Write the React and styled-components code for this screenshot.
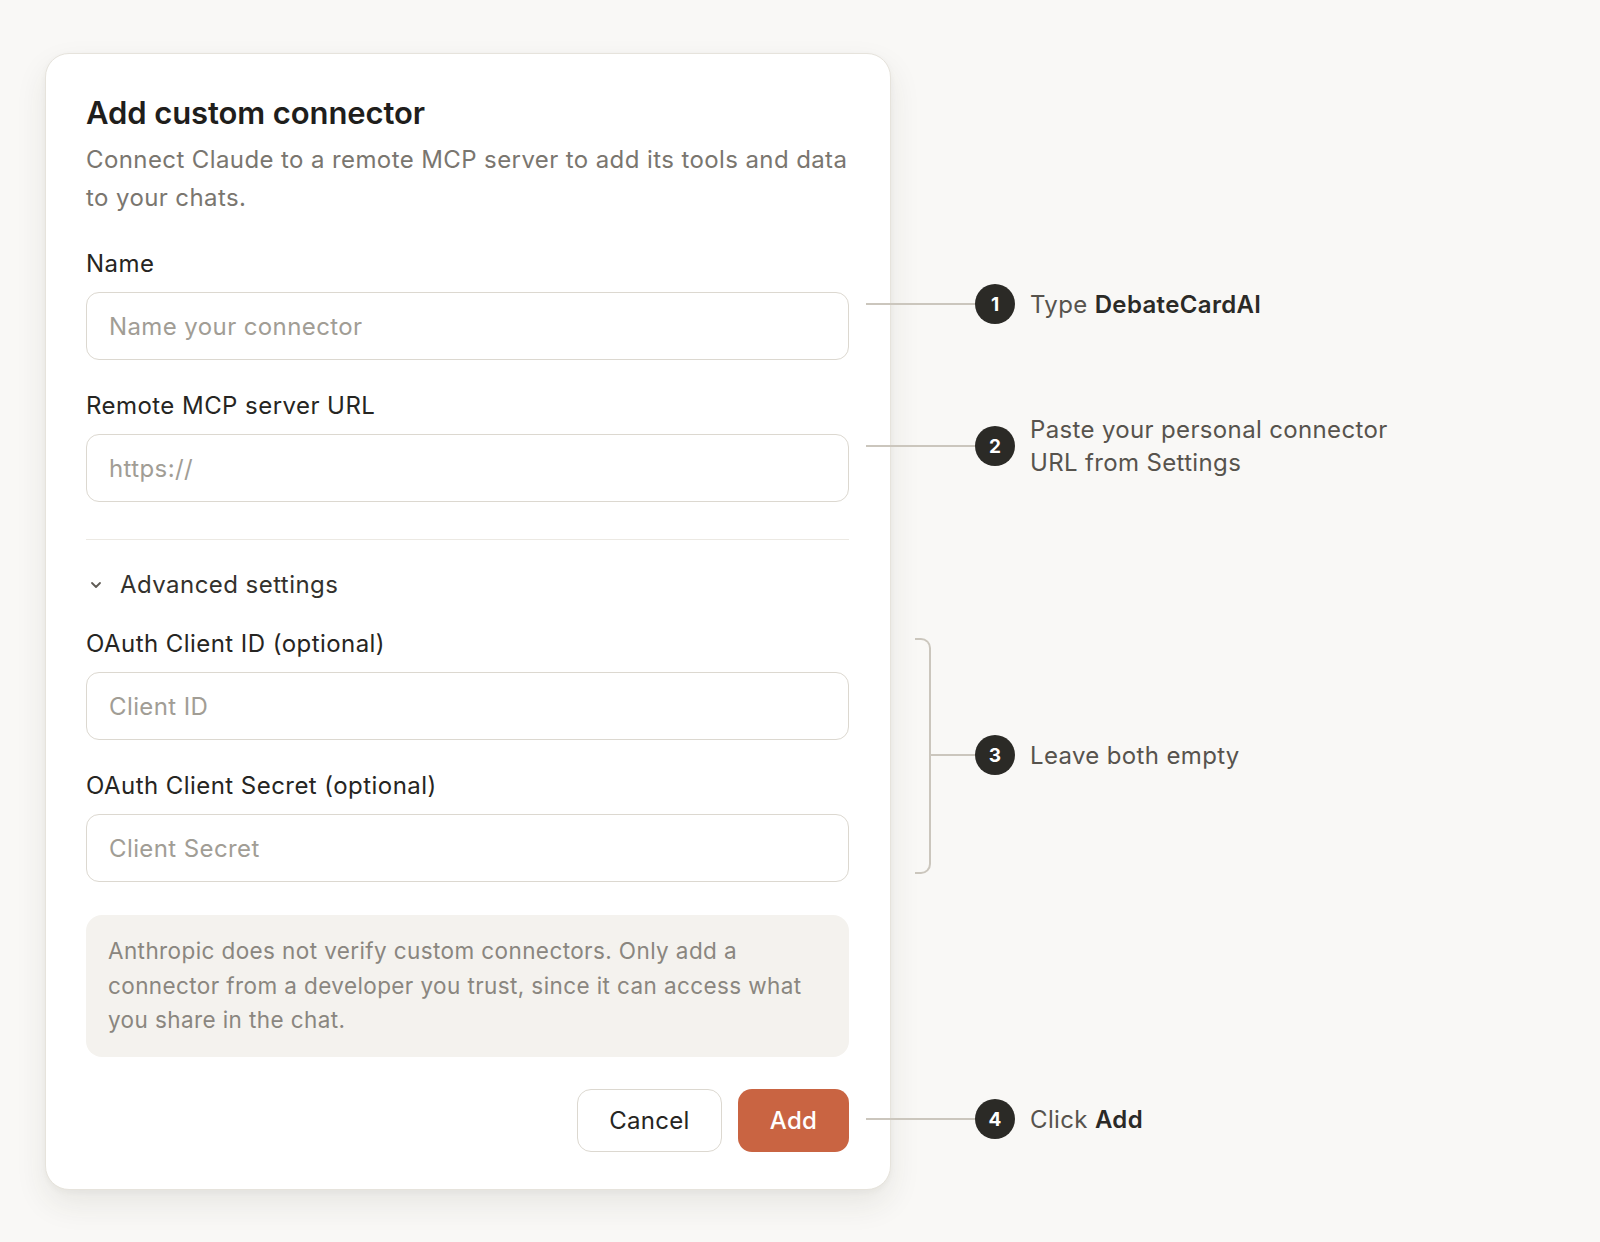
import React from 'react';
import styled, { createGlobalStyle } from 'styled-components';

const GlobalStyle = createGlobalStyle`
  html, body {
    margin: 0;
    padding: 0;
    background: #f9f8f6;
  }
  body {
    font-family: Inter, "Noto Sans", "Liberation Sans", sans-serif;
    -webkit-font-smoothing: antialiased;
  }
`;

const Stage = styled.div`
  position: relative;
  width: 1600px;
  height: 1242px;
  padding: 53px 0 0 45px;
  box-sizing: border-box;
`;

const Card = styled.div`
  width: 846px;
  box-sizing: border-box;
  background: #ffffff;
  border: 1px solid #e6e3dc;
  border-radius: 24px;
  padding: 41px 41px 37px 40px;
  box-shadow: 0 14px 32px rgba(60, 50, 30, 0.09), 0 2px 6px rgba(60, 50, 30, 0.04);
  display: flex;
  flex-direction: column;
`;

const Title = styled.h2`
  margin: 0;
  font-size: 31px;
  line-height: 36px;
  font-weight: 600;
  color: #1f1e1c;
  letter-spacing: -0.1px;
`;

const Description = styled.p`
  margin: 10px 0 0 0;
  font-size: 24px;
  line-height: 38px;
  color: #7a766f;
  letter-spacing: 0.4px;
`;

const Field = styled.div`
  display: flex;
  flex-direction: column;
  gap: 13px;
  margin-top: ${p => p.$top || 31}px;
`;

const Label = styled.label`
  font-size: 24px;
  line-height: 30px;
  font-weight: 400;
  color: #262522;
  letter-spacing: 0.45px;
`;

const Input = styled.input`
  height: 68px;
  box-sizing: border-box;
  width: 100%;
  border: 1.5px solid #dcd8d0;
  border-radius: 13px;
  padding: 0 22px;
  font-family: inherit;
  font-size: 24px;
  letter-spacing: 0.4px;
  color: #2b2a27;
  background: #fff;
  outline: none;
  &::placeholder {
    color: #a19d95;
  }
`;

const Divider = styled.hr`
  margin: 37px 0 0 0;
  border: none;
  border-top: 1.5px solid #ece9e3;
`;

const Toggle = styled.div`
  display: flex;
  align-items: center;
  gap: 17px;
  margin-top: 30px;
  padding-left: 3px;
  font-size: 24px;
  line-height: 30px;
  font-weight: 400;
  letter-spacing: 0.45px;
  color: #33312d;
`;

const Notice = styled.div`
  margin-top: 33px;
  background: #f4f2ee;
  border-radius: 16px;
  padding: 19px 22px;
  font-size: 22.5px;
  line-height: 34.5px;
  letter-spacing: 0.4px;
  color: #8a867f;
`;

const Actions = styled.div`
  display: flex;
  justify-content: flex-end;
  gap: 16px;
  margin-top: 32px;
`;

const Button = styled.button`
  height: 63px;
  box-sizing: border-box;
  padding: 0 28px;
  border-radius: 14px;
  font-family: inherit;
  font-size: 24px;
  font-weight: ${p => (p.$primary ? 500 : 400)};
  letter-spacing: 0.3px;
  cursor: pointer;
  border: ${p => (p.$primary ? 'none' : '1.5px solid #dcd8d0')};
  background: ${p => (p.$primary ? '#c96442' : '#ffffff')};
  color: ${p => (p.$primary ? '#ffffff' : '#262522')};
  min-width: ${p => (p.$primary ? 111 : 145)}px;
`;

const Callout = styled.div`
  position: absolute;
  left: ${p => p.$x}px;
  top: ${p => p.$y}px;
  transform: translateY(-50%);
  display: flex;
  align-items: center;
`;

const Leader = styled.div`
  width: ${p => p.$w}px;
  height: 2px;
  background: #cbc6bd;
`;

const Badge = styled.div`
  width: 40px;
  height: 40px;
  flex: none;
  border-radius: 50%;
  background: #2b2a26;
  color: #ffffff;
  display: flex;
  align-items: center;
  justify-content: center;
  font-size: 19px;
  font-weight: 700;
`;

const CalloutText = styled.div`
  margin-left: 15px;
  font-size: 24px;
  line-height: 33px;
  color: #57534d;
  letter-spacing: 0.35px;
  b {
    font-weight: 600;
    color: #2b2a27;
  }
`;

const Bracket = styled.div`
  position: absolute;
  left: 915px;
  top: 638px;
  width: 14px;
  height: 232px;
  border: 2px solid #cbc6bd;
  border-left: none;
  border-radius: 0 10px 10px 0;
`;

const Chevron = () => (
  <svg width="14" height="14" viewBox="0 0 14 14" fill="none">
    <path d="M3 5l4 4 4-4" stroke="#5f5b54" strokeWidth="1.8" strokeLinecap="round" strokeLinejoin="round" />
  </svg>
);

export default function App() {
  return (
    <>
      <GlobalStyle />
      <Stage>
        <Card>
          <Title>Add custom connector</Title>
          <Description>
            Connect Claude to a remote MCP server to add its tools and data to your chats.
          </Description>

          <Field $top={32}>
            <Label>Name</Label>
            <Input placeholder="Name your connector" />
          </Field>

          <Field>
            <Label>Remote MCP server URL</Label>
            <Input placeholder="https://" />
          </Field>

          <Divider />

          <Toggle>
            <Chevron />
            Advanced settings
          </Toggle>

          <Field $top={29}>
            <Label>OAuth Client ID (optional)</Label>
            <Input placeholder="Client ID" />
          </Field>

          <Field>
            <Label>OAuth Client Secret (optional)</Label>
            <Input placeholder="Client Secret" />
          </Field>

          <Notice>
            Anthropic does not verify custom connectors. Only add a connector from a developer you
            trust, since it can access what you share in the chat.
          </Notice>

          <Actions>
            <Button>Cancel</Button>
            <Button $primary>Add</Button>
          </Actions>
        </Card>

        <Callout $x={866} $y={304}>
          <Leader $w={109} />
          <Badge>1</Badge>
          <CalloutText>
            Type <b>DebateCardAI</b>
          </CalloutText>
        </Callout>

        <Callout $x={866} $y={446}>
          <Leader $w={109} />
          <Badge>2</Badge>
          <CalloutText>
            Paste your personal connector
            <br />
            URL from Settings
          </CalloutText>
        </Callout>

        <Bracket />
        <Callout $x={931} $y={755}>
          <Leader $w={44} />
          <Badge>3</Badge>
          <CalloutText>Leave both empty</CalloutText>
        </Callout>

        <Callout $x={866} $y={1119}>
          <Leader $w={109} />
          <Badge>4</Badge>
          <CalloutText>
            Click <b>Add</b>
          </CalloutText>
        </Callout>
      </Stage>
    </>
  );
}
